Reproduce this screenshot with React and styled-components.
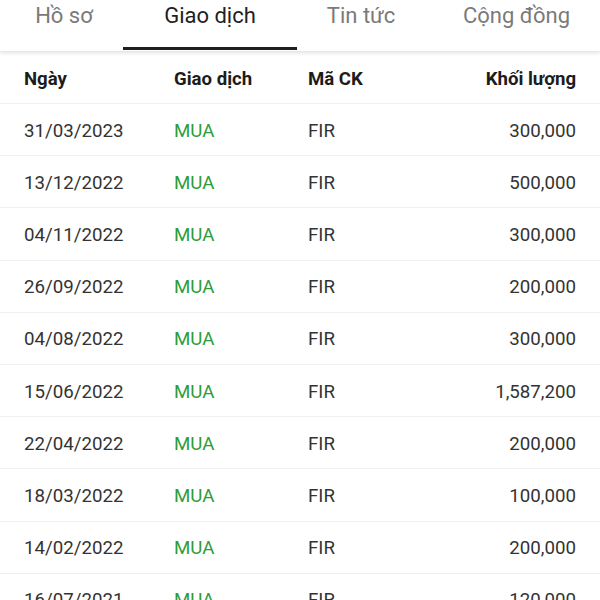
import React from "react";
import styled, { createGlobalStyle } from "styled-components";

const Global = createGlobalStyle`
  html, body { margin: 0; padding: 0; background: #fff; }
  body { font-family: Roboto, "Noto Sans", Arial, sans-serif; -webkit-font-smoothing: antialiased; }
`;

const Page = styled.div`
  width: 600px;
  height: 600px;
  overflow: hidden;
  background: #fff;
`;

const TabBar = styled.div`
  display: grid;
  grid-template-columns: 123px 174px 126px 1fr;
  height: 51px;
  background: #fff;
  box-shadow: 0 2px 4px rgba(0, 0, 0, 0.12);
  position: relative;
  z-index: 1;
`;

const Tab = styled.div`
  position: relative;
  display: flex;
  justify-content: center;
  padding-top: 3px;
  font-size: 22px;
  color: ${(p) => (p.$active ? "#1f1f1f" : "#7a7a7a")};
  box-sizing: border-box;
  padding-left: ${(p) => p.$shift || 0}px;
  &::after {
    content: "";
    display: ${(p) => (p.$active ? "block" : "none")};
    position: absolute;
    left: 0;
    right: 0;
    bottom: 1px;
    height: 3px;
    background: #1f1f1f;
  }
`;

const Row = styled.div`
  display: grid;
  grid-template-columns: 150px 134px 1fr 160px;
  align-items: center;
  padding: ${(p) => (p.$head ? "3px" : "2px")} 24px 0;
  border-bottom: 1px solid #efefef;
  box-sizing: border-box;
  font-size: ${(p) => (p.$head ? "18.6px" : "18.7px")};
  font-weight: ${(p) => (p.$head ? 700 : 400)};
  color: ${(p) => (p.$head ? "#1c1c1c" : "#333")};
  height: ${(p) => (p.$head ? "53px" : "52.2px")};
`;

const Cell = styled.div`
  text-align: ${(p) => (p.$right ? "right" : "left")};
  color: ${(p) => (p.$buy ? "#2f9d36" : "inherit")};
`;

const tabs = [
  { label: "Hồ sơ", shift: 5 },
  { label: "Giao dịch", active: true },
  { label: "Tin tức", shift: 2 },
  { label: "Cộng đồng", shift: 10 },
];

const rows = [
  ["31/03/2023", "300,000"],
  ["13/12/2022", "500,000"],
  ["04/11/2022", "300,000"],
  ["26/09/2022", "200,000"],
  ["04/08/2022", "300,000"],
  ["15/06/2022", "1,587,200"],
  ["22/04/2022", "200,000"],
  ["18/03/2022", "100,000"],
  ["14/02/2022", "200,000"],
  ["16/07/2021", "120,000"],
];

export default function App() {
  return (
    <Page>
      <Global />
      <TabBar>
        {tabs.map((t) => (
          <Tab key={t.label} $active={t.active} $shift={t.shift}>
            {t.label}
          </Tab>
        ))}
      </TabBar>
      <Row $head>
        <Cell>Ngày</Cell>
        <Cell>Giao dịch</Cell>
        <Cell>Mã CK</Cell>
        <Cell $right>Khối lượng</Cell>
      </Row>
      {rows.map(([d, v]) => (
        <Row key={d}>
          <Cell>{d}</Cell>
          <Cell $buy>MUA</Cell>
          <Cell>FIR</Cell>
          <Cell $right>{v}</Cell>
        </Row>
      ))}
    </Page>
  );
}
